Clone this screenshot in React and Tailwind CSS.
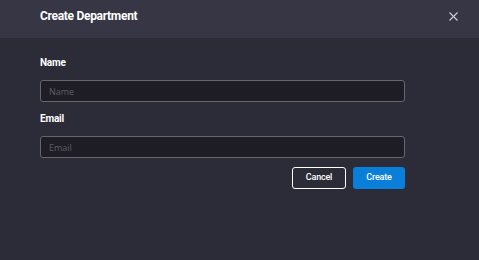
import React, { useState } from 'react';

const Field = ({ label, name, value, onChange }) => (
  <div>
    <label className="block text-[10px] font-bold text-white leading-none mb-[12px] tracking-[-0.2px]">{label}</label>
    <input
      type="text"
      name={name}
      value={value}
      onChange={onChange}
      placeholder={label}
      className="block w-full h-[22px] rounded-[3px] border border-[#66656d] bg-[#1e1d25] px-[8px] text-[9px] text-white placeholder-[#5f5e66] outline-none"
      style={{ fontFamily: '"Open Sans", sans-serif' }}
    />
  </div>
);

const App = () => {
  const [form, setForm] = useState({ name: '', email: '' });

  const handleChange = (e) => {
    const { name, value } = e.target;
    setForm(prev => ({ ...prev, [name]: value }));
  };

  return (
    <div className="w-[479px] h-[260px] bg-[#2c2b38] flex flex-col" style={{ fontFamily: 'Roboto, "Liberation Sans", sans-serif' }}>
      <div className="h-[38px] shrink-0 bg-[#373645] flex items-start justify-between pl-[40px] pr-[21px]">
        <h1 className="pt-[10px] text-[12px] leading-none font-bold text-white tracking-[-0.3px]">Create Department</h1>
        <button className="mt-[12px] text-[#c9c9d0]">
          <svg width="9" height="9" viewBox="0 0 9 9" fill="none" stroke="currentColor" strokeWidth="1.2" className="block">
            <path d="M0.5 0.5 L8.5 8.5 M8.5 0.5 L0.5 8.5" />
          </svg>
        </button>
      </div>

      <div className="pl-[40px] pr-[74px] pt-[20px] flex flex-col gap-[12px]">
        <Field label="Name" name="name" value={form.name} onChange={handleChange} />
        <Field label="Email" name="email" value={form.email} onChange={handleChange} />
      </div>

      <div className="flex justify-end gap-[7px] pr-[74px] mt-[9px]">
        <button className="w-[54px] h-[22px] rounded-[3px] border border-white text-white text-[9px] font-medium tracking-[-0.2px]">
          Cancel
        </button>
        <button className="w-[52px] h-[22px] rounded-[3px] bg-[#0a7fd9] text-white text-[9px] font-medium tracking-[-0.2px]">
          Create
        </button>
      </div>
    </div>
  );
};

export default App;
